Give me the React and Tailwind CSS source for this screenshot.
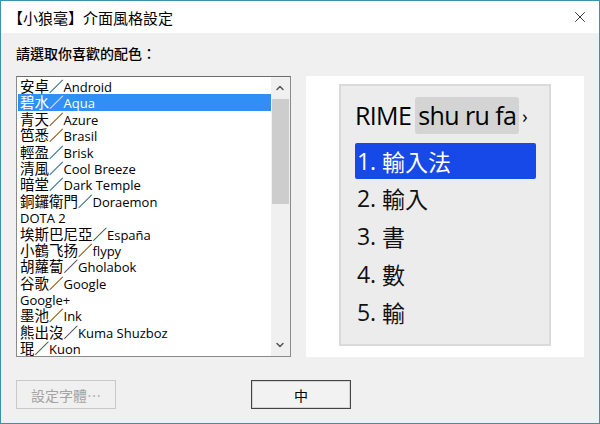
import { X, ChevronUp, ChevronDown } from 'lucide-react';

const schemes = [
  ['安卓', 'Android'],
  ['碧水', 'Aqua'],
  ['青天', 'Azure'],
  ['笆悉', 'Brasil'],
  ['輕盈', 'Brisk'],
  ['清風', 'Cool Breeze'],
  ['暗堂', 'Dark Temple'],
  ['銅鑼衛門', 'Doraemon'],
  [null, 'DOTA 2'],
  ['埃斯巴尼亞', 'España'],
  ['小鶴飞扬', 'flypy'],
  ['胡蘿蔔', 'Gholabok'],
  ['谷歌', 'Google'],
  [null, 'Google+'],
  ['墨池', 'Ink'],
  ['熊出沒', 'Kuma Shuzboz'],
  ['琨', 'Kuon'],
];

const candidates = ['輸入', '書', '數', '輸'];

const cjk = { fontFamily: '"Noto Sans CJK TC", sans-serif' };

const App = () => {
  const selected = 1;

  return (
    <div
      className="w-[600px] h-[424px] flex flex-col bg-[#f0f0f0] border border-[#3a93ab] overflow-hidden text-black"
      style={{ fontFamily: '"Open Sans", "Noto Sans CJK TC", sans-serif' }}
    >
      {/* title bar */}
      <div className="h-[32px] bg-white flex items-center justify-between pl-[7px] pr-[10px] shrink-0">
        <span className="text-[15px] leading-none" style={cjk}>
          【小狼毫】介面風格設定
        </span>
        <X className="w-[18px] h-[18px] text-[#222]" strokeWidth={1.2} />
      </div>

      <div className="flex-1 flex flex-col px-[15px]">
        <div className="pt-[11px] h-[43px] text-[14px] leading-[18px] font-medium" style={cjk}>
          請選取你喜歡的配色：
        </div>

        <div className="flex items-start gap-[15px]">
          {/* listbox */}
          <div className="w-[277px] h-[281px] bg-white border border-[#8a8a8a] border-t-[#6e6e6e] flex overflow-hidden">
            <div className="flex-1 pt-[1px] pl-[1px] overflow-hidden">
              {schemes.map(([zh, en], i) => (
                <div
                  key={en}
                  className={`h-[16.4px] leading-[16.4px] whitespace-nowrap pl-[2px] ${i === selected ? 'bg-[#2f8ff5] text-white' : ''}`}
                >
                  {zh && (
                    <span className="text-[14.5px] align-baseline" style={cjk}>
                      {zh}／
                    </span>
                  )}
                  <span className="text-[13px] align-baseline">{en}</span>
                </div>
              ))}
            </div>
            <div className="w-[19px] bg-[#f0f0f0] flex flex-col items-center">
              <div className="h-[22px] flex items-center justify-center">
                <ChevronUp className="w-[12px] h-[12px] text-[#555]" strokeWidth={3} />
              </div>
              <div className="w-[17px] h-[105px] bg-[#cdcdcd]" />
              <div className="flex-1" />
              <div className="h-[22px] flex items-center justify-center">
                <ChevronDown className="w-[12px] h-[12px] text-[#555]" strokeWidth={3} />
              </div>
            </div>
          </div>

          {/* preview */}
          <div className="w-[280px] h-[281px] bg-white pl-[33px] pt-[8px]">
            <div className="w-[212px] h-[262px] bg-[#ececec] border-2 border-[#dadada] pl-[14px] pr-[13px] pt-[10px]">
              <div className="flex items-center h-[39px] text-[25px] leading-none tracking-[-0.6px]">
                <span className="mr-[4px]">RIME</span>
                <span className="bg-[#d4d4d4] rounded-[3px] h-[37px] flex items-center px-[3px]">shu ru fa</span>
                <span className="text-[18px] ml-[3px]">›</span>
              </div>
              <div className="mt-[8px] h-[36px] bg-[#1749e8] rounded-[2px] text-white flex items-center pl-[2px] text-[23px] leading-none">
                1.&nbsp;<span style={cjk}>輸入法</span>
              </div>
              {candidates.map((c, i) => (
                <div key={c} className="h-[38px] flex items-center pl-[2px] text-[23px] leading-none text-[#111]">
                  {i + 2}.&nbsp;<span style={cjk}>{c}</span>
                </div>
              ))}
            </div>
          </div>
        </div>

        {/* buttons */}
        <div className="flex items-center mt-[23px]">
          <button
            type="button"
            disabled
            className="w-[100px] h-[29px] border border-[#c8c8c8] bg-[#f0f0f0] text-[#a3a3a3] text-[14px] leading-none"
            style={cjk}
          >
            設定字體…
          </button>
          <button
            type="button"
            className="ml-[135px] w-[100px] h-[29px] border border-[#444] bg-[#f2f2f2] shadow-[inset_0_0_0_1px_#d5d5d5] text-[14px] leading-none"
            style={cjk}
          >
            中
          </button>
        </div>
      </div>
    </div>
  );
};

export default App;
